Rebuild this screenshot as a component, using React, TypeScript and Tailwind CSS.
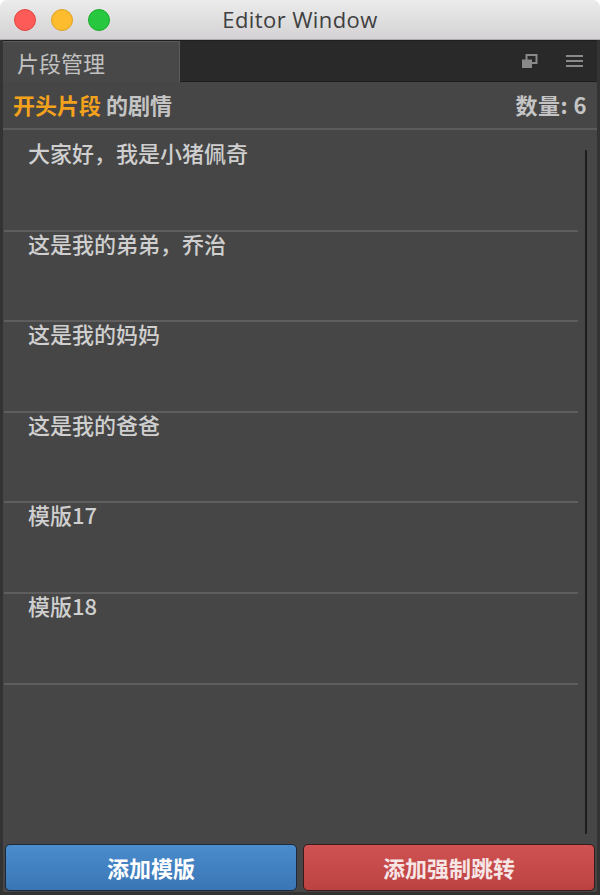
const items = ["大家好，我是小猪佩奇", "这是我的弟弟，乔治", "这是我的妈妈", "这是我的爸爸", "模版17", "模版18"];

const cjk = { fontFamily: '"Noto Sans CJK SC", "Noto Sans", sans-serif' };

function RestoreIcon() {
  return (
    <svg width="17" height="15" viewBox="0 0 17 15" className="text-[#8a8a8a]">
      <rect x="5.5" y="1" width="10" height="8" fill="none" stroke="currentColor" strokeWidth="2" />
      <rect x="1" y="5.5" width="10" height="8.5" fill="currentColor" />
    </svg>
  );
}

function MenuIcon() {
  return (
    <svg width="17" height="14" viewBox="0 0 17 14" className="text-[#8a8a8a]">
      <rect x="0" y="1" width="17" height="2" fill="currentColor" />
      <rect x="0" y="6" width="17" height="2" fill="currentColor" />
      <rect x="0" y="11" width="17" height="2" fill="currentColor" />
    </svg>
  );
}

export default function App() {
  return (
    <div className="w-[600px] h-[895px] flex flex-col bg-white" style={cjk}>
      {/* title bar */}
      <div className="h-[40px] shrink-0 grid grid-cols-[1fr_auto_1fr] items-center rounded-t-[7px] bg-gradient-to-b from-[#ececec] to-[#d4d2d4] border-b border-[#a9a9a9]">
        <div className="flex items-center gap-[15px] pl-[14px]">
          <span className="w-[22px] h-[22px] rounded-full bg-[#fd5b57] border border-[#e0443e]" />
          <span className="w-[22px] h-[22px] rounded-full bg-[#fdbc2e] border border-[#dea123]" />
          <span className="w-[22px] h-[22px] rounded-full bg-[#27c73f] border border-[#1aab29]" />
        </div>
        <div className="text-[22px] text-[#3f3f3f] tracking-[0.4px]" style={{ fontFamily: '"Open Sans", "Liberation Sans", sans-serif' }}>
          Editor Window
        </div>
        <div />
      </div>

      {/* window body */}
      <div className="flex-1 flex flex-col bg-[#464646] border-x-[3px] border-b-[3px] border-[#333333]">
        {/* tab strip */}
        <div className="h-[42px] shrink-0 flex bg-[#292929] border-t border-[#1e1e1e]">
          <div className="w-[177px] bg-[#484848] border-t border-r border-[#5a5a5a] flex items-center pl-[14px] text-[22px] text-[#c2c2c2]">
            片段管理
          </div>
          <div className="flex-1 flex items-center justify-end gap-[28px] pr-[14px] border-b border-[#1c1c1c]">
            <RestoreIcon />
            <MenuIcon />
          </div>
        </div>

        {/* header */}
        <div className="h-[48px] shrink-0 flex items-center justify-between px-[10px] pb-[2px] border-b-2 border-[#5c5c5c] text-[22px] font-semibold">
          <div>
            <span className="text-[#f4a21c]">开头片段</span>
            <span className="text-[#c4c4c4]"> 的剧情</span>
          </div>
          <div className="text-[#c4c4c4] tracking-[0.5px]">数量: 6</div>
        </div>

        {/* list */}
        <div className="flex-1 flex">
          <div className="w-[574px] ml-px pt-[11px]">
            {items.map((t) => (
              <div key={t} className="h-[90.6px] border-b-2 border-[#5e5e5e] pl-[24px] text-[22px] leading-[22px] font-medium text-[#cfcfcf]">
                {t}
              </div>
            ))}
          </div>
          <div className="ml-[7px] mt-[20px] mb-[5px] w-[2px] bg-[#1e1e1e]" />
        </div>

        {/* buttons */}
        <div className="shrink-0 flex gap-[6px] px-[2px] pt-[5px] pb-[1px]">
          <button className="flex-1 h-[47px] rounded-[5px] border-[1.5px] border-[#1b2a3c] bg-gradient-to-b from-[#4a8ccc] to-[#3a76b6] text-white text-[22px] font-bold">
            添加模版
          </button>
          <button className="flex-1 h-[47px] rounded-[5px] border-[1.5px] border-[#3a1a1a] bg-gradient-to-b from-[#d05252] to-[#bc4242] text-[#f6e6e6] text-[22px] font-bold">
            添加强制跳转
          </button>
        </div>
      </div>
    </div>
  );
}
